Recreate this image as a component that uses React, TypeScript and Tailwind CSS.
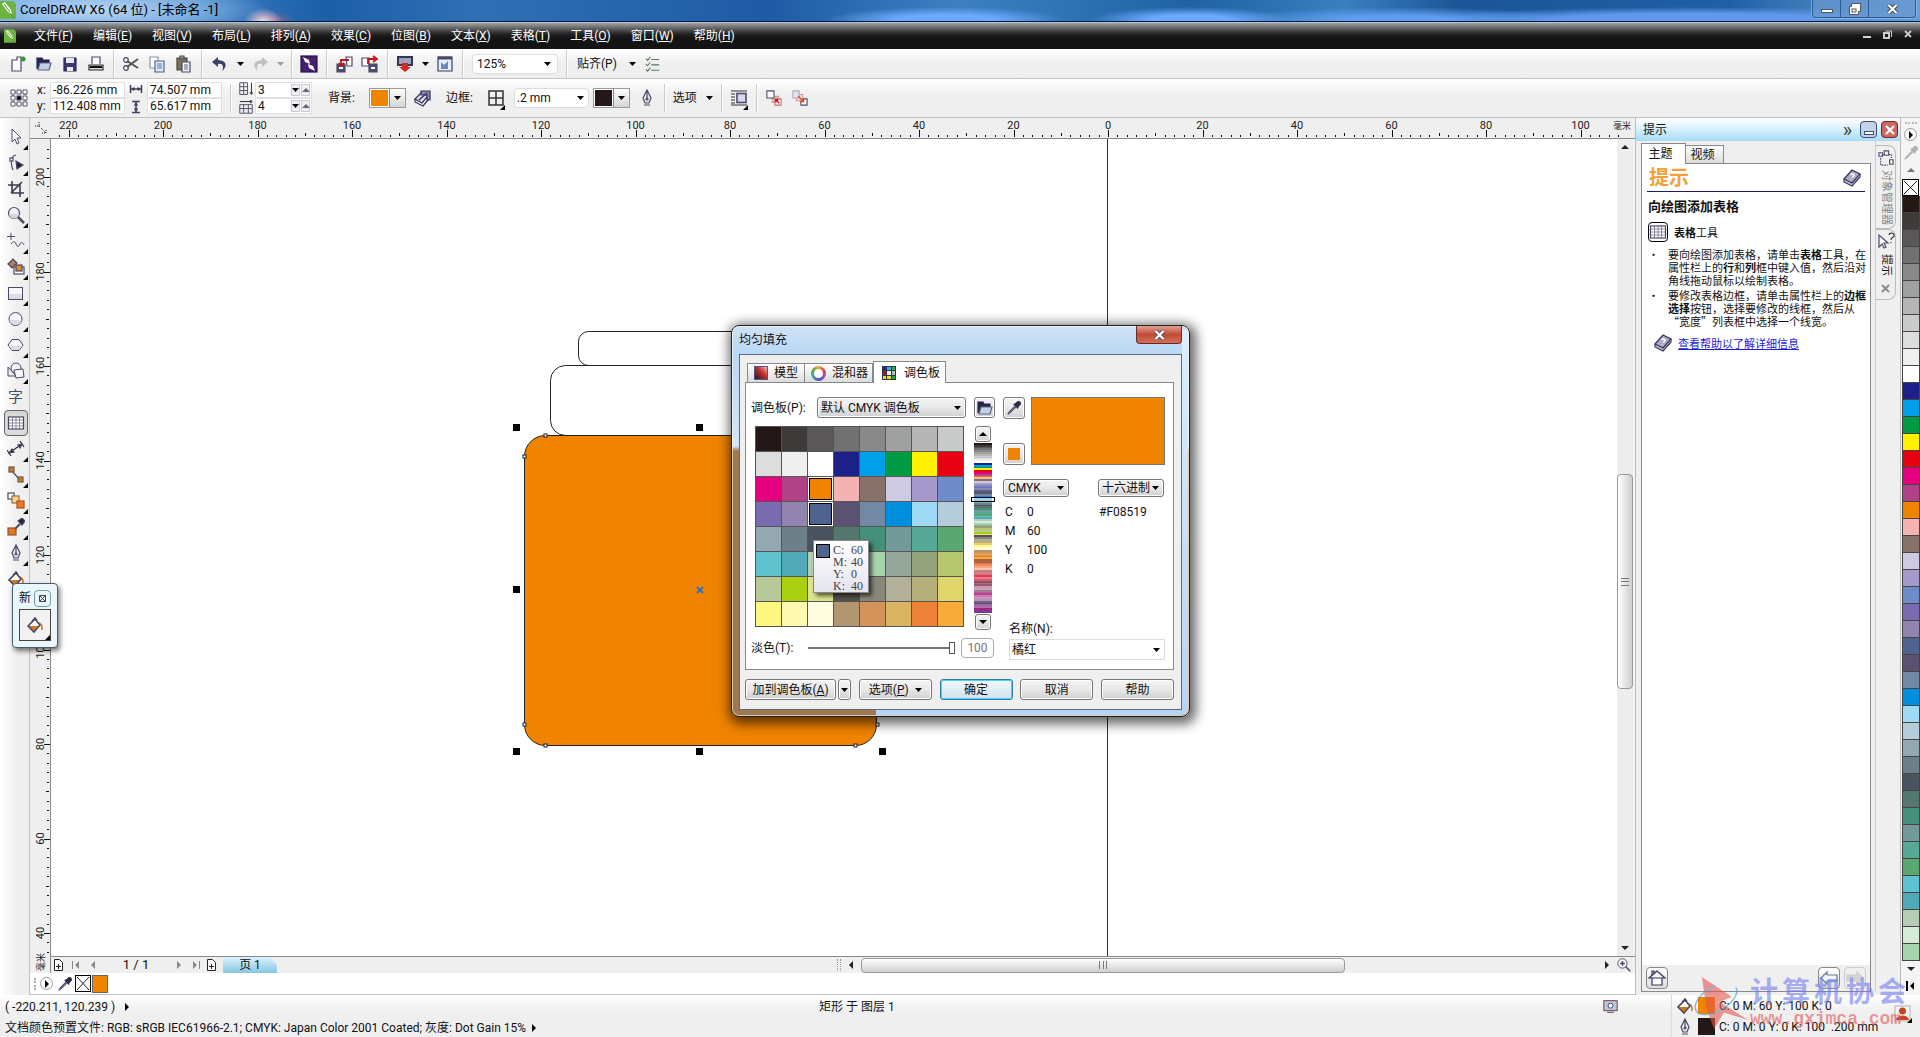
import type { ReactNode } from "react";
import clsx from "clsx";

const paletteRows = [
  ["#231815", "#3e3a39", "#595757", "#727171", "#898989", "#9fa0a0", "#b5b5b6", "#c9caca"],
  ["#dcdddd", "#efefef", "#ffffff", "#1d2088", "#00a0e9", "#009944", "#fff100", "#e60012"],
  ["#e4007f", "#b04286", "#f08300", "#f5b2b2", "#86726a", "#cfcae4", "#a599cb", "#6f8bc9"],
  ["#7a6bb0", "#9185b0", "#4e648f", "#5a5270", "#7388a3", "#008fdc", "#9fd9f6", "#b5cddb"],
  ["#93a8b1", "#6d7f88", "#4b535e", "#54786f", "#45907a", "#739a98", "#55a995", "#5ba772"],
  ["#5ec2cf", "#4fa9b7", "#b5cdb5", "#d5ecd8", "#a5d4ad", "#95a79a", "#95a37a", "#b7c770"],
  ["#b5c895", "#aacf0f", "#dce68c", "#55514b", "#88877a", "#b2af9a", "#b5b07a", "#dfd56b"],
  ["#fff67f", "#fff9b1", "#fffde0", "#b39570", "#d3935b", "#d9b563", "#ee8236", "#f6ab3a"],
];
const palette = paletteRows.flat();
const stripTail = [
  "#a5643c", "#b0663f", "#e2703f", "#ee8a5f", "#f5a887", "#f9c9b0", "#c97a80", "#cf7f86",
  "#d9747f", "#e83857", "#f4768a", "#c9606e", "#8a5262", "#b26a80", "#a0566f", "#c79aac",
  "#c9a3b6", "#a47d98", "#c6539a", "#b4458c", "#c77fb5", "#d18fc0", "#ab9bb8", "#71607f",
  "#5f4a76", "#a565a6", "#b070b0", "#a3237f", "#7d3c92", "#6f3d8d",
];

const menus = [
  ["文件", "F"], ["编辑", "E"], ["视图", "V"], ["布局", "L"], ["排列", "A"], ["效果", "C"],
  ["位图", "B"], ["文本", "X"], ["表格", "T"], ["工具", "O"], ["窗口", "W"], ["帮助", "H"],
];

const MM20 = 94.5;

function Svg({ size = 18, children }: { size?: number; children: ReactNode }) {
  return (
    <svg width={size} height={size} viewBox="0 0 18 18" fill="none" stroke="#4a4a68" strokeWidth="1.2" className="shrink-0">
      {children}
    </svg>
  );
}

function Caret({ dim = false }: { dim?: boolean }) {
  return (
    <svg width="7" height="4" viewBox="0 0 7 4" className={clsx("shrink-0", dim ? "fill-gray-400" : "fill-black")}>
      <path d="M0 0h7L3.5 4z" />
    </svg>
  );
}

function Triangle({ dir, color = "#222" }: { dir: "up" | "down" | "left" | "right"; color?: string }) {
  const d = { up: "M0 6 4 2 8 6z", down: "M0 2h8L4 6z", left: "M6 0v8L2 4z", right: "M2 0v8l4-4z" }[dir];
  return (
    <svg width="8" height="8" viewBox="0 0 8 8" fill={color} className="shrink-0">
      <path d={d} />
    </svg>
  );
}

function CorelLogo({ size = 16 }: { size?: number }) {
  return (
    <svg width={size} height={size + 2} viewBox="0 0 16 18" className="shrink-0">
      <path d="M0 0h13l3 3v15H0z" fill="#6cb33f" />
      <path d="M2 3 5 1l6 8 1 4-4-2z" fill="#fff" />
      <path d="M4 3l6 8M11 13l3 4" stroke="#4b8f2a" />
    </svg>
  );
}

const Book = () => (
  <Svg>
    <path d="M1 10v3l8 4 8-9V5" fill="#f2f2f8" stroke="#33335a" />
    <path d="M1.500 12l7.500 3.500L16.500 7" stroke="#8a8aa8" strokeWidth=".8" />
    <path d="M1 10 9 1l8 4-8 9z" fill="#a9a9c8" stroke="#33335a" />
    <path d="M7.500 6c1.500-2 5-.5 3 1.500L9 8.500M8 10v.6" stroke="#fff" strokeWidth="1.400" />
  </Svg>
);

const FillEdit = () => (
  <Svg>
    <path d="M1 10v3l8 4 5-6" fill="#f2f2f8" stroke="#33335a" />
    <path d="M1 10 8 3l6 4-6 7z" fill="#dcdcea" stroke="#33335a" />
    <path d="M7 2h9v9h-3V6H7z" fill="#8a8ab0" stroke="#33335a" />
    <path d="M5 11l8-7" stroke="#33335a" strokeWidth="1.500" />
  </Svg>
);

const Eyedropper = ({ dim = false, size = 18 }: { dim?: boolean; size?: number }) => (
  <Svg size={size}>
    <path d="M10 7 4 13l-2 3 3-2 6-6" fill="#d5d5e5" stroke={dim ? "#b0b0b0" : "#4a4a68"} />
    <path d="M9 5l4 4 1-2 2-2c1-2-1-4-3-3l-2 2z" fill={dim ? "#b0b0b0" : "#2d2d4a"} stroke={dim ? "#b0b0b0" : "#2d2d4a"} />
  </Svg>
);

const Bucket = () => (
  <Svg>
    <path d="M2 10 9 3l5 6-6 7z" fill="#fff" />
    <path d="M2 10h12l-6 6z" fill="#d0791d" stroke="none" />
    <path d="M9 3V1M6 5l3-3 2 2" stroke="#3a3a50" />
    <path d="M13 7c3 1 3 3 3 7" stroke="#d0791d" strokeWidth="1.600" />
    <path d="M2 10 9 3l5 6-6 7z" />
  </Svg>
);

const PenNib = () => (
  <Svg>
    <path d="M9 1 5 9l2 5h4l2-5zM9 2v7M6 16h6" fill="#e9e9f2" />
    <circle cx="9" cy="10" r="1" />
  </Svg>
);

const GridIcon = () => (
  <Svg>
    <rect x="1.500" y="3" width="15" height="12" fill="#fff" />
    <path d="M5.500 3v12M9 3v12M12.500 3v12M1.500 6h15M1.500 9h15M1.500 12h15" strokeWidth=".6" />
  </Svg>
);

const Folder = () => (
  <Svg>
    <path d="M2 14V3h5l1 2h6v3" fill="#26264d" stroke="#26264d" />
    <path d="M5 8h11l-2 7H3z" fill="#c4d0e4" stroke="#5c6785" />
  </Svg>
);

const toolIcons: { name: string; icon: ReactNode; flyout?: boolean; active?: boolean }[] = [
  { name: "选择", flyout: true, icon: <Svg><path d="M5 1v13l3-3 2 5 2-1-2-5h4z" fill="#fff" strokeWidth="1" /></Svg> },
  { name: "形状", flyout: true, icon: <Svg><path d="M9 1C4 2 3 8 6 16" /><rect x="3" y="4" width="3" height="3" fill="#fff" /><path d="M9 7l1 8 6-4z" fill="#222" /></Svg> },
  { name: "裁剪", flyout: true, icon: <Svg><path d="M5 1v12h12M1 5h12v12M15 2 4 13" strokeWidth="1.600" stroke="#3b3b50" /></Svg> },
  { name: "缩放", flyout: true, icon: <Svg><circle cx="7" cy="7" r="5.500" fill="#f0f0f5" /><path d="M2 8h10c-1 6-9 6-10 0z" fill="#d5d5dd" stroke="none" /><path d="M11 11l6 6" strokeWidth="2.500" /></Svg> },
  { name: "手绘", flyout: true, icon: <Svg><path d="M4 1v7M0 4.500h8M4 12c2-3 4-3 5 0s3 3 4 0 3-1 4 1" strokeWidth="1" /></Svg> },
  { name: "智能填充", flyout: true, icon: <Svg><path d="M1 6l5-5 4 4-5 5z" fill="#b08050" /><rect x="7" y="9" width="10" height="7" fill="#fff" /><rect x="9" y="7" width="6" height="6" fill="#e08a2c" /></Svg> },
  { name: "矩形", flyout: true, icon: <Svg><rect x="1.500" y="3.500" width="14" height="12" fill="#f6f6fa" strokeWidth="1" /><path d="M2 10h13v5H2z" fill="#dcdce4" stroke="none" /></Svg> },
  { name: "椭圆形", flyout: true, icon: <Svg><circle cx="8.500" cy="9" r="6.500" fill="#f6f6fa" strokeWidth="1" /><path d="M2.500 10h12c-1 6.500-11 6.500-12 0z" fill="#dcdce4" stroke="none" /></Svg> },
  { name: "多边形", flyout: true, icon: <Svg><path d="M5 3.500h7l4 5.500-4 5.500H5L1 9z" fill="#f6f6fa" strokeWidth="1" /><path d="M2 10h13l-3 4H5z" fill="#dcdce4" stroke="none" /></Svg> },
  { name: "基本形状", flyout: true, icon: <Svg><path d="M1 5v9h8z" fill="#eee" strokeWidth="1" /><circle cx="9" cy="6" r="5" fill="#f6f6fa" strokeWidth="1" /><path d="M7 8l9-1 1 8-8 1z" fill="#f6f6fa" strokeWidth="1" /></Svg> },
  { name: "文本", icon: <span className="text-[15px] leading-4 text-[#4a4a68]">字</span> },
  { name: "表格", active: true, icon: <GridIcon /> },
  { name: "平行度量", flyout: true, icon: <Svg><path d="M2 13 15 4M0 10l4 6M13 1l4 6" stroke="#26263c" /><path d="M2 13l3-4 2 3zM15 4l-4 1 2 3z" fill="#26263c" /></Svg> },
  { name: "直线连接器", flyout: true, icon: <Svg><path d="M5 5l8 9" /><rect x="2" y="1" width="5" height="5" fill="#b97a3d" stroke="#7a5a35" /><rect x="11" y="11" width="5" height="5" fill="#b97a3d" stroke="#7a5a35" /></Svg> },
  { name: "调和", flyout: true, icon: <Svg><rect x="1" y="1" width="6" height="6" fill="#fff" /><rect x="5" y="4" width="7" height="7" fill="#ffd596" stroke="#a06a30" /><rect x="10" y="9" width="7" height="7" fill="#f47b16" stroke="#a0522d" /></Svg> },
  { name: "颜色滴管", flyout: true, icon: <Svg><rect x="1" y="10" width="8" height="7" fill="#e07b1c" stroke="#a0522d" /><path d="M8 11l5-5" strokeWidth="2" /><path d="M11 3l4 4 3-4-3-3z" fill="#222238" /></Svg> },
  { name: "轮廓笔", flyout: true, icon: <PenNib /> },
  { name: "填充", icon: <Bucket /> },
];

function Flyout() {
  return (
    <svg width="5" height="5" viewBox="0 0 5 5" className="absolute right-0 bottom-0 fill-black">
      <path d="M5 0v5H0z" />
    </svg>
  );
}

function Sep({ className = "mx-2" }: { className?: string }) {
  return <div className={clsx("h-7 w-px shrink-0 bg-[#c8c8c8] shadow-[1px_0_0_#fff]", className)} />;
}

function IconButton({ label, className = "w-[26px]", children }: { label: string; className?: string; children: ReactNode }) {
  return (
    <button aria-label={label} className={clsx("flex h-6 shrink-0 items-center justify-center", className)}>
      {children}
    </button>
  );
}

function TitleBar() {
  return (
    <header className="flex h-[22px] shrink-0 items-start justify-between border-b border-[#0c1a33] bg-[radial-gradient(ellipse_170px_30px_at_100px_10px,#c4dcf5e6,#8fbcebb3_60%,transparent),radial-gradient(ellipse_20px_16px_at_263px_24px,#fff,#e0b8c8aa_55%,transparent),radial-gradient(ellipse_20px_10px_at_276px_22px,#b06078aa,transparent),radial-gradient(ellipse_120px_13px_at_945px_20px,#6ca9fb_40%,transparent),radial-gradient(ellipse_100px_13px_at_1190px_20px,#6ca9fb_40%,transparent),radial-gradient(ellipse_170px_13px_at_1400px_20px,#609fee_30%,transparent),radial-gradient(ellipse_270px_13px_at_1690px_20px,#6199ea_50%,transparent),linear-gradient(90deg,#6fb0e8,#1c5ea8_17%,#2f70b5_25%,#1e5ba5_40%,#3d80c2_50%,#2e72b5_56%,#1f62a4_62%,#3a7fc0_70%,#1b5597_76%,#1f5fa6_90%,#6b9fd6)]">
      <div className="flex h-5 items-center gap-1">
        <CorelLogo />
        <h1 className="text-[13px] leading-4 text-black">CorelDRAW X6 (64 位) - [未命名 -1]</h1>
      </div>
      <div className="mr-1 flex h-[18px] divide-x divide-[#2c5d96] rounded-b border border-t-0 border-[#2c5d96] bg-[#6a9ad0]/70 shadow-[0_0_0_1px_#a9c8ea80]">
        <button aria-label="最小化" className="flex w-7 items-center justify-center">
          <span className="mt-1 h-1 w-3 border border-gray-600 bg-white" />
        </button>
        <button aria-label="还原" className="flex w-7 items-center justify-center">
          <svg width="13" height="12" viewBox="0 0 13 12" fill="none" stroke="#555">
            <path d="M3.500.5h9v8h-2v3h-9v-8h2z" fill="#fff" />
            <rect x="4" y="6" width="4" height="3" />
          </svg>
        </button>
        <button aria-label="关闭" className="flex w-[46px] items-center justify-center">
          <svg width="11" height="10" viewBox="0 0 11 10" stroke="#444" strokeWidth="4">
            <path d="M1.500 1l8 8M9.500 1l-8 8" />
            <path d="M1.500 1l8 8M9.500 1l-8 8" stroke="#fff" strokeWidth="2.200" />
          </svg>
        </button>
      </div>
    </header>
  );
}

function MenuBar() {
  return (
    <nav className="flex h-[27px] shrink-0 items-center border-t border-[#a9c3e0] bg-linear-to-b from-[#a3a3a3] from-0% via-[#1e1e1e] via-45% to-[#141414] to-60% pl-1 text-white">
      <CorelLogo size={12} />
      <div className="ml-[18px] flex flex-1 gap-5">
        {menus.map(([name, key]) => (
          <button key={key} className="whitespace-nowrap">
            {name}(<u>{key}</u>)
          </button>
        ))}
      </div>
      <div className="flex gap-3 pr-2 pb-1">
        <button aria-label="最小化文档" className="flex w-2 items-end pb-px"><span className="h-0.5 w-2 bg-gray-300" /></button>
        <button aria-label="还原文档">
          <svg width="9" height="9" viewBox="0 0 9 9" fill="none" stroke="#ccc"><path d="M2.500 1h6v6" /><rect x="1" y="3" width="5" height="5" strokeWidth="2" /></svg>
        </button>
        <button aria-label="关闭文档">
          <svg width="8" height="8" viewBox="0 0 8 8" stroke="#ccc" strokeWidth="1.800"><path d="M1 1l6 6M7 1 1 7" /></svg>
        </button>
      </div>
    </nav>
  );
}

function StandardBar() {
  return (
    <div className="flex h-[30px] shrink-0 items-center border-b border-[#c3c3c3] bg-linear-to-b from-white to-[#efefef] to-50% pl-[5px]">
      <IconButton label="新建"><Svg><path d="M3 5h5V2h4v14H3z" fill="#fff" /><circle cx="14" cy="4" r="2.500" fill="#38963a" stroke="none" /></Svg></IconButton>
      <IconButton label="打开"><Folder /></IconButton>
      <IconButton label="保存"><Svg><path d="M3 3h12v13H3z" fill="#3a3a66" stroke="#2a2a50" /><path d="M5 3h8v5H5zM6 12h6v4H6z" fill="#e4e8f3" stroke="none" /></Svg></IconButton>
      <IconButton label="打印"><Svg><path d="M5 9V2h8v7" fill="#fff" /><path d="M2 10h14v5H2z" fill="#d5d5d5" stroke="#333" /><path d="M3 12h12" stroke="#111" strokeWidth="2" /></Svg></IconButton>
      <Sep className="mr-1 ml-1" />
      <IconButton label="剪切"><Svg><path d="M5 6l11 7M5 12 16 4" strokeWidth="2" stroke="#555" /><circle cx="4" cy="5" r="2.300" /><circle cx="4" cy="13" r="2.300" /></Svg></IconButton>
      <IconButton label="复制"><Svg><path d="M2 2h8v11H2z" fill="#fff" stroke="#8894ad" /><path d="M7 6h9v11H7z" fill="#dfe9f7" stroke="#4f658c" /><path d="M9 9h5M9 11h5M9 13h5" stroke="#5a7bb0" /></Svg></IconButton>
      <IconButton label="粘贴"><Svg><path d="M3 3h10v12H3z" fill="#7d7258" stroke="#4b4533" /><path d="M6 1h4v3H6z" fill="#999" /><path d="M8 7h8v10H8z" fill="#f2f4fb" /><path d="M10 10h4M10 12h4M10 14h4" stroke="#667" /></Svg></IconButton>
      <Sep className="mx-[5px]" />
      <IconButton label="撤消"><Svg><path d="M7 2 1 7l6 5V9c5-1 6 3 4 7 5-4 6-10-4-11z" fill="#3a4168" stroke="none" /></Svg></IconButton>
      <IconButton label="撤消列表" className="w-[14px]"><Caret /></IconButton>
      <IconButton label="重做"><Svg><path d="M11 2l6 5-6 5V9c-5-1-6 3-4 7-5-4-6-10 4-11z" fill="#c0c0c0" stroke="none" /></Svg></IconButton>
      <IconButton label="重做列表" className="w-[14px]"><Caret dim /></IconButton>
      <Sep className="mx-1" />
      <IconButton label="搜索内容"><Svg><rect x="1" y="1" width="16" height="16" fill="#43216e" stroke="#2a1150" /><path d="M3 2l6 3 1 4-5-2zM15 16l-6-3-1-4 5 2z" fill="#fff" stroke="none" /></Svg></IconButton>
      <Sep className="mx-1" />
      <IconButton label="导入"><Svg><path d="M11 2h6v9h-5z" fill="#fff" /><path d="M2 9h8v8H2z" fill="#4b4b78" /><path d="M4 12h4v2H4z" fill="#fff" stroke="none" /><path d="M14 5H6v5M4 8l2 3 3-3" stroke="#c01414" strokeWidth="1.800" /></Svg></IconButton>
      <IconButton label="导出"><Svg><path d="M1 3h7v8H1z" fill="#fff" /><path d="M8 9h8v8H8z" fill="#4b4b78" /><path d="M10 12h4v2h-4z" fill="#fff" stroke="none" /><path d="M7 9V4h7M12 1l4 3-4 3" stroke="#c01414" strokeWidth="1.800" /></Svg></IconButton>
      <Sep className="mr-1 ml-1" />
      <IconButton label="应用程序启动器"><Svg><path d="M2 2h14v8H2z" fill="#9aa3bf" stroke="#33384f" strokeWidth="2" /><path d="M6 8h6v4h3l-6 5-6-5h3z" fill="#d02a20" stroke="none" /></Svg></IconButton>
      <IconButton label="启动器列表" className="w-[14px]"><Caret /></IconButton>
      <IconButton label="欢迎屏幕"><Svg><path d="M2 2h14v14H2z" fill="#e4edf8" stroke="#33406a" /><path d="M2 3h14" strokeWidth="3" /><path d="M5 14V7l3 3 4-4v8z" fill="#6b86b8" stroke="none" /></Svg></IconButton>
      <Sep className="mr-[9px] ml-1" />
      <div className="flex h-5 w-[86px] items-center rounded-sm border border-[#dcdcdc] bg-white pr-1.5 pl-1">
        <input aria-label="缩放级别" defaultValue="125%" className="w-full min-w-0 bg-transparent outline-none" />
        <Caret />
      </div>
      <Sep className="mr-[10px] ml-[8px]" />
      <button className="flex w-[59px] items-center justify-between whitespace-nowrap">贴齐(P) <Caret /></button>
      <IconButton label="选项" className="ml-1 w-[26px]"><Svg size={16}><path d="M1 3l2 2 3-4M7 4h9M1 9l2 2 3-4M7 10h9M1 15l2 2 3-4M7 16h9" stroke="#557a5a" /></Svg></IconButton>
    </div>
  );
}

function Field({ label, value }: { label: string; value: string }) {
  return <input aria-label={label} defaultValue={value} className="h-4 w-[75px] border border-[#e0e0e0] bg-white px-0.5 outline-none" />;
}

function SpinField({ label, value }: { label: string; value: string }) {
  return (
    <div className="flex h-4 items-center gap-px border border-[#e0e0e0] bg-white pr-px">
      <input aria-label={label} defaultValue={value} className="w-[34px] bg-transparent px-0.5 outline-none" />
      <button aria-label={label + "减少"} className="flex h-3 w-[9px] items-center justify-center border border-[#c5cad8] bg-[#eef0f6]"><Caret /></button>
      <button aria-label={label + "增加"} className="flex h-3 w-[9px] items-center justify-center border border-[#c5cad8] bg-[#eef0f6]"><Triangle dir="up" color="#667" /></button>
    </div>
  );
}

function ColorDrop({ label, color }: { label: string; color: string }) {
  return (
    <button aria-label={label} className="flex h-[20px] w-[37px] shrink-0 border border-[#999] bg-white">
      <span className="m-px flex-1" style={{ background: color }} />
      <span className="flex w-4 items-center justify-center border-l border-[#888] bg-linear-to-b from-white to-[#d5d5d5]"><Caret /></span>
    </button>
  );
}

function PropertyBar() {
  return (
    <div className="flex h-[39px] shrink-0 items-center border-b border-[#c3c3c3] bg-linear-to-b from-white to-[#efefef] to-40% pl-[10px]">
      <Svg>
        <path d="M3 3h12v12H3z" strokeDasharray="1 1" />
        <path d="M1 1h4v4H1zM7 1h4v4H7zM13 1h4v4h-4zM1 7h4v4H1zM13 7h4v4h-4zM1 13h4v4H1zM7 13h4v4H7zM13 13h4v4h-4z" fill="#fff" strokeWidth=".9" />
        <path d="M7 7h4v4H7z" fill="#000" />
      </Svg>
      <div className="ml-[9px] w-[13px] leading-4"><div>x:</div><div>y:</div></div>
      <div className="flex flex-col"><Field label="x" value="-86.226 mm" /><Field label="y" value="112.408 mm" /></div>
      <div className="ml-1 flex flex-col gap-1">
        <Svg size={14}><path d="M2 4v10M16 4v10M3 9h12" strokeWidth="2" stroke="#3c3c60" /><path d="M3 9l4-3v6zM15 9l-4-3v6z" fill="#3c3c60" stroke="none" /></Svg>
        <Svg size={14}><path d="M4 2h10M4 16h10M9 3v12" strokeWidth="2" stroke="#3c3c60" /><path d="M9 3 6 7h6zM9 15l-3-4h6z" fill="#3c3c60" stroke="none" /></Svg>
      </div>
      <div className="ml-1 flex flex-col"><Field label="宽度" value="74.507 mm" /><Field label="高度" value="65.617 mm" /></div>
      <Sep className="mr-2 ml-2" />
      <div className="flex flex-col gap-1">
        <Svg size={14}><path d="M1 1h10v15H1zM1 6h10M1 11h10M6 1v15" /><path d="M16 1v14M14 13l2 3 2-3" stroke="#222" /></Svg>
        <Svg size={14}><path d="M1 6h16v11H1zM1 11h16M6 6v11M12 6v11" /><path d="M1 2h15M14 0l3 2-3 2" stroke="#222" /></Svg>
      </div>
      <div className="ml-0.5 flex flex-col"><SpinField label="行数" value="3" /><SpinField label="列数" value="4" /></div>
      <span className="ml-4 whitespace-nowrap">背景:</span>
      <div className="ml-[14px]"><ColorDrop label="背景颜色" color="#f08300" /></div>
      <IconButton label="编辑填充" className="ml-1 w-[26px]"><FillEdit /></IconButton>
      <span className="ml-[10px] whitespace-nowrap">边框:</span>
      <IconButton label="边框选择" className="relative ml-[14px] w-[18px]"><Svg><path d="M2 2h14v14H2zM9 2v14M2 9h14" stroke="#333" strokeWidth="1.500" /></Svg><Flyout /></IconButton>
      <div className="ml-[9px] flex h-5 w-[75px] items-center rounded-sm border border-[#dcdcdc] bg-white pr-1 pl-0.5">
        <input aria-label="轮廓宽度" defaultValue=".2 mm" className="w-full min-w-0 bg-transparent outline-none" />
        <Caret />
      </div>
      <div className="ml-1"><ColorDrop label="轮廓颜色" color="#231815" /></div>
      <IconButton label="轮廓笔" className="ml-1 w-[26px]"><PenNib /></IconButton>
      <Sep className="mr-2 ml-1" />
      <button className="flex w-10 items-center justify-between whitespace-nowrap">选项 <Caret /></button>
      <Sep className="mr-2 ml-2" />
      <IconButton label="文本换行" className="relative w-[18px]"><Svg><path d="M1 2h16M1 16h16M1 5h4M1 8h4M1 11h4M1 14h4" stroke="#333" /><rect x="7" y="4.500" width="9" height="9" fill="#d5d9ee" strokeWidth="1.600" /></Svg><Flyout /></IconButton>
      <Sep className="mr-1 ml-2" />
      <IconButton label="到图层前面"><Svg size={16}><path d="M7 7h7v7H7z" fill="#e8c5c5" stroke="#c99" /><path d="M10 10h7v7h-7z" fill="#fff" stroke="#c66" /><path d="M1 1h8v8H1z" fill="#fff" /><path d="M15 15l-4-4M11 14v-3h3" stroke="#c01c1c" strokeWidth="1.500" /></Svg></IconButton>
      <IconButton label="到图层后面"><Svg size={16}><path d="M10 10h7v7h-7z" fill="#fff" /><path d="M5 5h7v7H5z" fill="#f5dccb" stroke="#c99" /><path d="M1 1h7v8H1z" fill="#e2e2f2" stroke="#aab" /><path d="M7 7l6 6M13 9v4H9" stroke="#cf4a12" strokeWidth="1.500" /></Svg></IconButton>
    </div>
  );
}

function Toolbox() {
  return (
    <aside className="flex w-[30px] shrink-0 flex-col items-center border-r border-[#c0c0c0] bg-linear-to-r from-white to-[#efefef] to-60% pt-1.5 pl-0.5">
      {toolIcons.map((tool) => (
        <button
          key={tool.name}
          aria-label={tool.name}
          className={clsx(
            "relative flex h-[26px] w-[24px] items-center justify-center",
            tool.active && "rounded border border-[#666] bg-[#dcdcdc] shadow-inner"
          )}
        >
          {tool.icon}
          {tool.flyout && <Flyout />}
        </button>
      ))}
    </aside>
  );
}

function HorizontalRuler() {
  const zero = 1057;
  const ticks = Array.from({ length: 166 }, (_, i) => i - 111);
  const labels = Array.from({ length: 17 }, (_, i) => i - 11);
  return (
    <div className="flex h-[21px] shrink-0 border-b border-[#888] bg-[#efefef]">
      <div className="flex w-[21px] shrink-0 items-center justify-center">
        <svg width="12" height="12" viewBox="0 0 12 12" fill="none" stroke="#222" strokeDasharray="1 1">
          <path d="M0 4h6M4 0v6M6 6l5 5M7 11h4V7" />
        </svg>
      </div>
      <div className="min-w-0 flex-1 overflow-hidden">
        <svg width="1584" height="20" className="block">
          {ticks.map((t) => (
            <rect key={t} x={Math.round(zero + (t * MM20) / 10)} y={t % 10 === 0 ? 12 : t % 5 === 0 ? 15 : 17} width="1" height={t % 10 === 0 ? 7 : t % 5 === 0 ? 3 : 2} fill="#111" />
          ))}
          {labels.map((n) => (
            <text key={n} x={zero + n * MM20} y="11" textAnchor="middle" fontSize="11" fill="#222">{Math.abs(n * 20)}</text>
          ))}
          <text x="1562" y="11" fontSize="9" fill="#222">毫米</text>
        </svg>
      </div>
    </div>
  );
}

function VerticalRuler() {
  // 200 mm sits 38px below the ruler's top edge
  const top = 38;
  const ticks = Array.from({ length: 86 }, (_, i) => i - 3);
  const labels = Array.from({ length: 9 }, (_, i) => i);
  return (
    <div className="w-[21px] shrink-0 overflow-hidden border-r border-[#888] bg-[#efefef]">
      <svg width="20" height="834" className="block">
        {ticks.map((t) => (
          <rect key={t} x={t % 10 === 0 ? 14 : t % 5 === 0 ? 16 : 17} y={Math.round(top + (t * MM20) / 10)} width={t % 10 === 0 ? 6 : t % 5 === 0 ? 3 : 2} height="1" fill="#111" />
        ))}
        {labels.map((n) => (
          <text key={n} transform={`translate(14 ${top + n * MM20}) rotate(-90)`} textAnchor="middle" fontSize="11" fill="#222">{200 - n * 20}</text>
        ))}
        <text transform="translate(14 832) rotate(-90)" fontSize="9" fill="#222">毫米</text>
      </svg>
    </div>
  );
}

function Drawing() {
  const handles = [[462, 285], [645, 285], [462, 447], [462, 609], [645, 609], [828, 609]];
  const nodes = [[494, 296], [473, 317], [473, 585], [494, 606], [804, 606], [826, 585]];
  return (
    <svg width="100%" height="100%" className="block">
      <path d="M1056.500 0v818" stroke="#333" />
      <g fill="#fff" stroke="#222">
        <rect x="527.500" y="192.500" width="240" height="34" rx="10" />
        <rect x="499.500" y="226.500" width="300" height="70" rx="15" />
        <rect x="473.500" y="296.500" width="352" height="310" rx="21" fill="#f08300" />
        {nodes.map(([x, y]) => <rect key={`${x}-${y}`} x={x - 1} y={y - 1} width="3" height="3" />)}
      </g>
      {handles.map(([x, y]) => <rect key={`${x}-${y}`} x={x} y={y} width="7" height="7" />)}
      <path d="M646 448l6 6M652 448l-6 6" stroke="#2e74b8" strokeWidth="2" />
    </svg>
  );
}

function PageAdd() {
  return (
    <button aria-label="添加页面" className="ml-0.5 shrink-0">
      <svg width="11" height="13" viewBox="0 0 11 13" fill="#fff" stroke="#222"><path d="M1.500.5h5l3 3v8h-8zM3 7.500h5M5.500 5v5" /></svg>
    </button>
  );
}

function PlayButton() {
  return (
    <button aria-label="调色板菜单" className="mx-1 flex size-[13px] shrink-0 items-center justify-center rounded-full border border-[#999] bg-white">
      <Triangle dir="right" color="#000" />
    </button>
  );
}

function Workspace() {
  return (
    <main className="flex min-w-0 flex-1 flex-col">
      <HorizontalRuler />
      <div className="flex min-h-0 flex-1">
        <VerticalRuler />
        <div className="flex min-w-0 flex-1 flex-col">
          <div className="flex min-h-0 flex-1">
            <div className="min-w-0 flex-1 overflow-hidden bg-white"><Drawing /></div>
            <div className="flex w-4 shrink-0 flex-col items-center bg-[#ededed] py-1">
              <button aria-label="向上滚动"><Triangle dir="up" /></button>
              <div className="flex-[322_1_0]" />
              <div className="flex w-4 flex-[212_1_0] items-center justify-center rounded-sm border border-[#999] bg-linear-to-r from-white to-[#cfcfcf]">
                <div className="h-2 w-2 border-y border-[#777] bg-[linear-gradient(#777,#777)] bg-[length:100%_1px] bg-center bg-no-repeat" />
              </div>
              <div className="flex-[254_1_0]" />
              <button aria-label="向下滚动"><Triangle dir="down" /></button>
            </div>
            <div className="w-0.5 bg-[#f4f4f4]" />
          </div>
          <div className="flex h-[17px] shrink-0 items-center border-t border-[#888] bg-[#efefef]">
            <div className="flex w-[172px] items-center">
              <PageAdd />
              <button aria-label="第一页" className="ml-2 flex items-center"><span className="h-2 w-px bg-[#888]" /><Triangle dir="left" color="#888" /></button>
              <button aria-label="上一页" className="ml-2"><Triangle dir="left" color="#888" /></button>
              <span className="w-[78px] text-center text-[13px] leading-4">1 / 1</span>
              <button aria-label="下一页"><Triangle dir="right" color="#888" /></button>
              <button aria-label="最后一页" className="mr-1 ml-2 flex items-center"><Triangle dir="right" color="#888" /><span className="h-2 w-px bg-[#888]" /></button>
              <PageAdd />
            </div>
            <button className="h-4 w-[54px] bg-linear-to-b from-[#dcf2fc] to-[#86c5e4] leading-4 [clip-path:polygon(0_0,86%_0,100%_50%,100%_100%,0_100%)]">页 1</button>
            <div className="flex-[560_1_0]" />
            <div className="h-3 w-1 border-x border-dotted border-[#999]" />
            <button aria-label="向左滚动" className="mx-[6px]"><Triangle dir="left" /></button>
            <div className="flex h-[15px] flex-[482_1_0] items-center justify-center rounded-sm border border-[#999] bg-linear-to-b from-white to-[#cfcfcf]">
              <div className="h-2 w-2 border-x border-[#777] bg-[linear-gradient(#777,#777)] bg-[length:1px_100%] bg-center bg-no-repeat" />
            </div>
            <div className="flex-[258_1_0]" />
            <button aria-label="向右滚动"><Triangle dir="right" /></button>
            <button aria-label="导航器" className="mr-1 ml-1.5">
              <Svg size={14}><circle cx="7" cy="7" r="6" fill="#fff" /><path d="M11 11l6 6M4 7h6M7 4v6" strokeWidth="2" /></Svg>
            </button>
          </div>
        </div>
      </div>
      <div className="flex h-[22px] shrink-0 items-center border-b border-[#c0c0c0] bg-white pl-1">
        <div className="h-3 w-0.5 border-l-2 border-dotted border-[#aaa]" />
        <PlayButton />
        <Eyedropper size={16} />
        <button aria-label="无填充" className="ml-0.5 flex h-[17px] w-4 border border-black">
          <svg width="100%" height="100%" viewBox="0 0 14 15" stroke="#222"><path d="M1 1l12 13M13 1 1 14" /></svg>
        </button>
        <button aria-label="橘红" className="ml-px h-[18px] w-4 border border-[#666] bg-[#f08300]" />
      </div>
    </main>
  );
}

function HintsDocker() {
  return (
    <aside className="flex w-[265px] shrink-0 flex-col border-l border-[#bbb] bg-[#efefef] pb-[3px]">
      <div className="flex h-[23px] shrink-0 items-center gap-1 bg-linear-to-b from-white via-[#d5effc] to-[#a5dcf7] pr-[2px] pl-[7px]">
        <span className="flex-1">提示</span>
        <span className="mr-1 text-[20px] leading-4 text-[#444]">»</span>
        <button aria-label="折叠泊坞窗" className="flex size-[17px] items-end justify-center rounded-sm border border-[#3e4d78] bg-[#c3d3ea] pb-0.5"><span className="h-1 w-2.5 border border-[#3e4d78] bg-white" /></button>
        <button aria-label="关闭泊坞窗" className="flex size-[17px] items-center justify-center rounded-sm border border-[#7c2020] bg-[#c96a66]">
          <svg width="10" height="10" viewBox="0 0 10 10" stroke="#fff" strokeWidth="2.200"><path d="M1 1l8 8M9 1 1 9" /></svg>
        </button>
      </div>
      <div className="flex min-h-0 flex-1">
        <div className="flex w-[235px] shrink-0 flex-col pt-0.5 pl-[5px]">
          <div role="tablist" className="flex items-end">
            <button role="tab" aria-selected className="relative z-10 -mb-px h-[21px] w-[45px] border border-b-0 border-[#888] bg-white pr-1.5 leading-4">主题</button>
            <button role="tab" className="h-[18px] w-[38px] border border-b-0 border-l-0 border-[#888] bg-linear-to-b from-white to-[#dcdcdc] pr-1 leading-4">视频</button>
          </div>
          <div className="flex flex-1 flex-col border border-[#888] bg-white">
            <div className="mx-[5px] flex h-7 items-center justify-between border-b border-[#1b1b6b] pr-1 pl-0.5">
              <h2 className="text-[20px] leading-6 font-bold text-[#f3a03c]">提示</h2>
              <Book />
            </div>
            <div className="flex-1 px-[6px] font-['Noto_Sans_CJK_SC',sans-serif] text-[11px] leading-[13px] whitespace-nowrap">
              <h3 className="mt-1.5 text-[13px] leading-4 font-bold">向绘图添加表格</h3>
              <div className="mt-2 flex items-center gap-1.5">
                <span className="flex size-5 items-center justify-center rounded-sm border border-black"><GridIcon /></span>
                <span><b>表格</b>工具</span>
              </div>
              <ul className="mt-1.5 space-y-0.5">
                <li className="flex gap-[9px]"><span>•</span><span>要向绘图添加表格，请单击<b>表格</b>工具，在<br />属性栏上的<b>行</b>和<b>列</b>框中键入值，然后沿对<br />角线拖动鼠标以绘制表格。</span></li>
                <li className="flex gap-[9px]"><span>•</span><span>要修改表格边框，请单击属性栏上的<b>边框</b><br /><b>选择</b>按钮，选择要修改的线框，然后从<br />“宽度”列表框中选择一个线宽。</span></li>
              </ul>
              <div className="mt-1.5 flex items-center gap-1.5 pl-[6px]">
                <Book />
                <a href="#help" className="text-[#1a1ae0] underline">查看帮助以了解详细信息</a>
              </div>
            </div>
            <div className="flex h-[26px] items-center gap-1 bg-[#efefef] px-1">
              <button aria-label="主页" className="mr-auto flex size-[22px] items-center justify-center rounded border border-[#888] bg-linear-to-b from-white to-[#ddd]">
                <Svg><path d="M4 9v7h10V9" fill="#fff" stroke="#33335a" /><path d="M1 9l8-7 8 7zM4 6V2h2v2" fill="#f5f5fc" stroke="#33335a" /></Svg>
              </button>
              <button aria-label="后退" className="flex size-[22px] items-center justify-center rounded border border-[#888] bg-linear-to-b from-white to-[#ddd]">
                <Svg><path d="M1 9l6-6v3h10v6H7v3z" fill="#f0f5fb" stroke="#6a7c94" /></Svg>
              </button>
              <button aria-label="前进" className="flex size-[22px] items-center justify-center rounded border border-[#ccc]">
                <Svg><path d="M17 9l-6-6v3H1v6h10v3z" fill="#d5d5d5" stroke="#ccc" /></Svg>
              </button>
            </div>
          </div>
        </div>
        <div className="ml-1 flex w-[22px] flex-col border-l border-[#ccc] pt-1 text-[11px]">
          <button className="flex h-[84px] w-5 flex-col items-center gap-1 rounded-r-lg border border-l-0 border-[#bbb] pt-1 text-[#888]">
            <Svg size={16}><path d="M1 3h4v4H1zM7 1h5v5H7zM13 11h4v5h-4z" /><path d="M5 5h2M12 5h3v4M3 9v8h8" strokeDasharray="2 1" /></Svg>
            <span className="leading-3 [text-orientation:sideways] [writing-mode:vertical-rl]">对象管理器</span>
          </button>
          <button className="flex h-[71px] w-5 flex-col items-center rounded-r-lg border border-l-0 border-[#bbb] pt-0.5">
            <Svg><path d="M2 3v12l3-3 2 4 2-1-2-4h4z" fill="#fff" /><path d="M12 3c1-3 6-2 5 1-1 2-3 1-3 4M14 10v1" stroke="#333" /></Svg>
            <span className="mt-1 leading-3 [text-orientation:sideways] [writing-mode:vertical-rl]">提示</span>
            <svg width="9" height="9" viewBox="0 0 9 9" stroke="#888" strokeWidth="1.800" className="mt-2"><path d="M1 1l7 7M8 1 1 8" /></svg>
          </button>
        </div>
      </div>
    </aside>
  );
}

function ColorPalette() {
  return (
    <aside className="flex w-5 shrink-0 flex-col items-center border-l border-[#bbb] bg-[#f4f4f4]">
      <div className="mt-1 h-1 w-3 border-t-2 border-dotted border-[#bbb]" />
      <div className="mt-0.5 flex"><PlayButton /></div>
      <div className="mt-1"><Eyedropper dim size={16} /></div>
      <button aria-label="上一组颜色" className="flex h-[18px] items-center"><Triangle dir="up" color="#777" /></button>
      <button aria-label="无" className="h-[17px] w-[17px] shrink-0 border border-black bg-white">
        <svg width="15" height="15" viewBox="0 0 15 15" stroke="#222"><path d="M1 1l13 13M14 1 1 14" /></svg>
      </button>
      <div className="flex w-[18px] flex-col border-x border-[#444]">
        {palette.slice(0, 45).map((c) => (
          <button key={c} aria-label={c} className="h-[17px] border-b border-[#444]" style={{ background: c }} />
        ))}
      </div>
      <button aria-label="下一组颜色" className="flex h-4 items-center"><Triangle dir="down" /></button>
      <button aria-label="展开调色板" className="mt-1 flex items-center"><span className="h-2.5 w-0.5 bg-black" /><Triangle dir="left" color="#000" /></button>
    </aside>
  );
}

function StatusBar() {
  return (
    <footer className="relative flex h-[42px] shrink-0 bg-linear-to-b from-white to-[#efefef] to-40% pl-[5px] leading-4">
      <div className="flex flex-1 flex-col justify-center gap-[5px] pt-0.5">
        <div className="flex">
          <span className="flex w-[814px] shrink-0 items-center gap-2">( -220.211, 120.239 ) <Triangle dir="right" color="#000" /></span>
          <span>矩形 于 图层 1</span>
        </div>
        <div className="flex items-center gap-1">文档颜色预置文件: RGB: sRGB IEC61966-2.1; CMYK: Japan Color 2001 Coated; 灰度: Dot Gain 15% <Triangle dir="right" color="#000" /></div>
      </div>
      <div className="w-[68px] pt-1">
        <Svg size={15}><rect x="1" y="2" width="16" height="12" fill="#b9c8e0" stroke="#7a3f4a" /><circle cx="9" cy="8" r="3" fill="#fff" /><path d="M5 16h8" /></Svg>
      </div>
      <div className="w-[249px] border-l border-[#ddd] pl-1">
        <div className="flex h-[21px] items-center gap-1"><Bucket /><span className="size-[17px] bg-[#f08300]" />C: 0 M: 60 Y: 100 K: 0</div>
        <div className="flex h-[21px] items-center gap-1"><PenNib /><span className="size-[17px] bg-[#231815]" /><span className="whitespace-pre">C: 0 M: 0 Y: 0 K: 100  .200 mm</span></div>
      </div>
      <button aria-label="用户" className="absolute top-2.5 right-2">
        <Svg><rect x="1" y="1" width="15" height="15" fill="#f5f5f5" stroke="#bbb" /><circle cx="8.500" cy="6" r="3.500" fill="#c9431f" stroke="none" /><path d="M2 15c1-6 12-6 13 0z" fill="#c9431f" stroke="none" /></Svg>
        <Flyout />
      </button>
    </footer>
  );
}

function Watermark() {
  return (
    <div className="pointer-events-none absolute right-[14px] bottom-1.5 flex items-end">
      <svg width="60" height="56" viewBox="0 0 60 56" className="opacity-60">
        <path d="M12 2 16 32 42 22zM16 32l42 13-28-18zM16 32l8 22 12-20z" fill="#e2554b" />
        <ellipse cx="26" cy="24" rx="23" ry="12" transform="rotate(-30 26 24)" fill="none" stroke="#4a90c8" strokeWidth="1.500" strokeDasharray="90 30" />
      </svg>
      <div>
        <div className="flex gap-1 text-[28px] leading-7 font-bold text-[#6f7bf0]/60">
          {["计", "算", "机", "协", "会"].map((c) => <span key={c}>{c}</span>)}
        </div>
        <div className="font-['Liberation_Mono',monospace] text-[18px] leading-6 font-bold text-[#dd5a5a]/60">www.gxjmca.com</div>
      </div>
    </div>
  );
}

const buttonSkin = "rounded-[3px] border border-[#777] bg-linear-to-b from-[#f5f5f5] via-[#e8e8e8] to-[#d0d0d0] shadow-[inset_0_0_0_1px_#fff]";

function FloatingToolbox() {
  return (
    <section aria-label="新工具栏" className="absolute top-[583px] left-3 w-[46px] rounded-sm border border-[#4c5c66] bg-[#e9f6fb] p-1.5 pt-1 shadow-[2px_3px_5px_#0008]">
      <div className="flex h-5 items-center justify-between">
        <span>新</span>
        <button aria-label="关闭工具栏" className="flex h-[17px] w-[17px] items-center justify-center rounded-sm border border-[#7a9aa5]">
          <svg width="7" height="7" viewBox="0 0 7 7" fill="none" stroke="#444"><path d="M.5.5h6v6h-6zM1 1l5 5M6 1 1 6" /></svg>
        </button>
      </div>
      <button aria-label="填充" className="relative mt-px flex h-8 w-8 items-center justify-center border border-[#444] bg-[#f2f2f2]">
        <Bucket />
        <Flyout />
      </button>
    </section>
  );
}

function SwatchGrid() {
  return (
    <div className="relative">
      <div className="grid w-[209px] grid-cols-8 border-t border-l border-[#555]">
        {palette.map((c) => (
          <button
            key={c}
            aria-label={c}
            className={clsx("h-[25px] border-r border-b border-[#555]", (c === "#f08300" || c === "#4e648f") && "shadow-[inset_0_0_0_1px_#fff,inset_0_0_0_2px_#000]")}
            style={{ background: c }}
          />
        ))}
      </div>
      <div role="tooltip" className="absolute top-[114px] left-[58px] flex h-[53px] w-[56px] gap-[3px] border border-[#888] bg-linear-to-b from-white to-[#e4e4ef] p-0.5 pt-[3px] font-['Liberation_Serif',serif] text-[12px] leading-3 text-[#444] shadow-[3px_3px_4px_#0009]">
        <span className="size-[14px] shrink-0 border border-black bg-[#4e648f]" />
        <dl className="grid grid-cols-[18px_auto] content-start">
          <dt>C:</dt><dd>60</dd>
          <dt>M:</dt><dd>40</dd>
          <dt>Y:</dt><dd>0</dd>
          <dt>K:</dt><dd>40</dd>
        </dl>
      </div>
    </div>
  );
}

function FillDialog() {
  return (
    <section
      role="dialog"
      aria-labelledby="fill-title"
      className="absolute top-[325px] left-[731px] w-[459px] rounded-lg border border-[#222] bg-[linear-gradient(#cfe2f5,#b9d7f6_28px,#d5e6f8_120px,#a07850_125px,#a07850)] px-[7px] pb-1.5 shadow-[inset_0_0_0_1px_#fff9,2px_3px_12px_4px_#0009]"
    >
      <div className="absolute inset-y-1 right-px w-1.5 bg-linear-to-b from-[#e0edfa] to-[#b7d4f3]" />
      <div className="absolute right-px bottom-px left-36 h-1.5 rounded-br-md bg-[#b7d4f3]" />
      <div className="relative flex h-7 items-start justify-between">
        <h2 id="fill-title" className="pt-1.5 leading-4">均匀填充</h2>
        <button aria-label="关闭" className="flex h-[18px] w-[46px] items-center justify-center rounded-b border border-t-0 border-[#6b2a22] bg-linear-to-b from-[#e0a193] via-[#c04a38] to-[#d0705a]">
          <svg width="11" height="10" viewBox="0 0 11 10" stroke="#555" strokeWidth="4"><path d="M1.500 1l8 8M9.500 1l-8 8" /><path d="M1.500 1l8 8M9.500 1l-8 8" stroke="#fff" strokeWidth="2.200" /></svg>
        </button>
      </div>
      <div className="relative border border-[#5a6b80] bg-[#efefef] pt-1.5 pr-[7px] pb-2 pl-[5px]">
        <div role="tablist" className="flex items-end pl-0.5">
          <button role="tab" className="flex h-[19px] w-[58px] items-center gap-1.5 border border-b-0 border-[#888] bg-linear-to-b from-white to-[#dcdcdc] pl-1.5 whitespace-nowrap">
            <svg width="14" height="14" className="shrink-0"><defs><linearGradient id="m" x1="0" y1="1" x2="1" y2="0"><stop offset="0" stopColor="#211" /><stop offset=".6" stopColor="#c33" /><stop offset="1" stopColor="#fcc" /></linearGradient></defs><rect x=".5" y=".5" width="13" height="13" fill="url(#m)" stroke="#558" /></svg>
            模型
          </button>
          <button role="tab" className="flex h-[19px] w-[68px] items-center gap-1.5 border border-b-0 border-l-0 border-[#888] bg-linear-to-b from-white to-[#dcdcdc] pl-1.5 whitespace-nowrap">
            <span className="size-[15px] shrink-0 rounded-full bg-[conic-gradient(#e9b03a,#d04a4a,#9a4ab5,#4a5ac0,#4aa0b0,#5aa84a,#e9b03a)] p-[3px]"><span className="block size-full rounded-full bg-white" /></span>
            混和器
          </button>
          <button role="tab" aria-selected className="relative z-10 -mb-px flex h-[22px] w-[73px] items-center gap-2 border border-b-0 border-[#888] bg-white pl-2 whitespace-nowrap">
            <svg width="14" height="14" className="shrink-0"><rect width="14" height="14" fill="#334" /><path d="M1 1h3v3H1z" fill="#12c" /><path d="M5 1h4v3H5z" fill="#2bd" /><path d="M10 1h3v3h-3z" fill="#3a3" /><path d="M1 5h3v4H1z" fill="#b11" /><path d="M5 5h4v4H5z" fill="#eee" /><path d="M10 5h3v4h-3z" fill="#bbb" /><path d="M1 10h3v3H1zM5 10h4v3H5z" fill="#ed2" /><path d="M10 10h3v3h-3z" fill="#1a3" /></svg>
            调色板
          </button>
        </div>
        <div className="flex h-[288px] border border-[#888] bg-white pt-3.5 pr-2 pl-[5px]">
          <div className="w-[252px] shrink-0">
            <div className="flex items-center">
              <label htmlFor="pal" className="w-[66px] whitespace-nowrap">调色板(P):</label>
              <button id="pal" className={clsx("flex h-[21px] w-[149px] items-center justify-between pr-1 pl-[3px] text-left", buttonSkin)}>默认 CMYK 调色板 <Caret /></button>
              <button aria-label="打开调色板" className={clsx("ml-2 flex size-[21px] items-center justify-center", buttonSkin)}><Folder /></button>
            </div>
            <div className="mt-2 flex justify-between pr-[11px] pl-1">
              <SwatchGrid />
              <div className="relative flex h-[204px] w-[18px] flex-col items-center">
                <button aria-label="向上" className={clsx("flex size-4 shrink-0 items-center justify-center", buttonSkin)}><Triangle dir="up" color="#000" /></button>
                <div className="my-px flex w-full flex-1 flex-col">
                  {[...palette, ...stripTail].map((c) => <i key={c} className="flex-1" style={{ background: c }} />)}
                </div>
                <span className="absolute top-[71px] h-[5px] w-6 border border-black" />
                <button aria-label="向下" className={clsx("flex size-4 shrink-0 items-center justify-center", buttonSkin)}><Triangle dir="down" color="#000" /></button>
              </div>
            </div>
            <div className="mt-2 flex items-center">
              <label htmlFor="tint" className="w-[57px]">淡色(T):</label>
              <input
                id="tint"
                type="range"
                defaultValue={100}
                className="h-4 w-[147px] appearance-none bg-transparent [&::-webkit-slider-runnable-track]:h-0.5 [&::-webkit-slider-runnable-track]:bg-[#777] [&::-webkit-slider-thumb]:-mt-[5px] [&::-webkit-slider-thumb]:h-3 [&::-webkit-slider-thumb]:w-[6px] [&::-webkit-slider-thumb]:appearance-none [&::-webkit-slider-thumb]:border [&::-webkit-slider-thumb]:border-[#555] [&::-webkit-slider-thumb]:bg-white"
              />
              <input aria-label="淡色值" defaultValue="100" className="ml-1.5 h-5 w-[33px] rounded-sm border border-[#aaa] text-center text-[#777]" />
            </div>
          </div>
          <div className="flex min-w-0 flex-1 flex-col">
            <div className="flex justify-between">
              <div className="flex flex-col justify-between">
                <button aria-label="滴管" className={clsx("flex size-[22px] items-center justify-center", buttonSkin)}><Eyedropper size={16} /></button>
                <button aria-label="当前颜色" className={clsx("flex size-[22px] items-center justify-center", buttonSkin)}><span className="size-3 bg-[#f08300]" /></button>
              </div>
              <div className="h-[68px] w-[134px] border border-[#777] bg-[#f08300]" />
            </div>
            <div className="mt-3.5 flex justify-between pr-px">
              <button className={clsx("flex h-[18px] w-[66px] items-center justify-between px-1 leading-4", buttonSkin)}>CMYK <Caret /></button>
              <button className={clsx("flex h-[18px] w-[66px] items-center justify-between pr-1 pl-[3px] leading-4 whitespace-nowrap", buttonSkin)}>十六进制<Caret /></button>
            </div>
            <div className="mt-1.5 flex justify-between">
              <dl className="grid grid-cols-[22px_auto] pl-0.5 leading-[19px]">
                <dt>C</dt><dd>0</dd>
                <dt>M</dt><dd>60</dd>
                <dt>Y</dt><dd>100</dd>
                <dt>K</dt><dd>0</dd>
              </dl>
              <span className="w-[66px] leading-[19px]">#F08519</span>
            </div>
            <label htmlFor="name" className="mt-auto pl-1.5 leading-4">名称(N):</label>
            <div className="mt-0.5 mb-[9px] ml-1.5 flex h-[21px] items-center border border-[#ddd] pr-1 pl-0.5">
              <input id="name" defaultValue="橘红" className="min-w-0 flex-1 outline-none" />
              <Caret />
            </div>
          </div>
        </div>
        <div className="mt-[9px] mb-px flex h-[21px] justify-between leading-4 whitespace-nowrap">
          <div className="flex gap-0.5">
            <button className={clsx("w-[91px]", buttonSkin)}>加到调色板(<u>A</u>)</button>
            <button aria-label="加到调色板列表" className={clsx("flex w-[13px] items-center justify-center", buttonSkin)}><Caret /></button>
          </div>
          <button className={clsx("flex w-[73px] items-center justify-center gap-1.5", buttonSkin)}><span>选项(<u>P</u>)</span><Caret /></button>
          <button className="w-[73px] rounded-[3px] border border-[#2c7fa8] bg-linear-to-b from-[#f2fafe] to-[#cfe2ec] shadow-[inset_0_0_0_1px_#50d0f0]">确定</button>
          <button className={clsx("w-[73px]", buttonSkin)}>取消</button>
          <button className={clsx("w-[73px]", buttonSkin)}>帮助</button>
        </div>
      </div>
    </section>
  );
}

export default function App() {
  return (
    <div className="relative flex h-screen w-full flex-col overflow-hidden bg-[#efefef] font-['Roboto','Noto_Sans_CJK_SC',sans-serif] text-[12px] leading-4 text-[#111]">
      <TitleBar />
      <MenuBar />
      <StandardBar />
      <PropertyBar />
      <div className="flex min-h-0 flex-1">
        <Toolbox />
        <Workspace />
        <HintsDocker />
        <ColorPalette />
      </div>
      <StatusBar />
      <FloatingToolbox />
      <FillDialog />
      <Watermark />
    </div>
  );
}
